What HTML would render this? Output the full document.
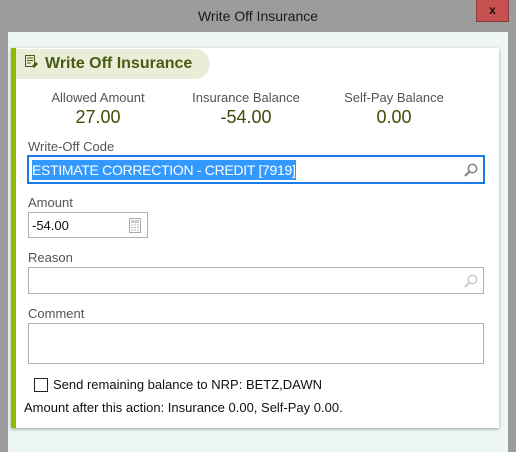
<!DOCTYPE html>
<html><head><style>
*{margin:0;padding:0;box-sizing:border-box}
body{width:516px;height:452px;background:#9c9c9c;font-family:"Liberation Sans",sans-serif;position:relative;overflow:hidden}
.abs{position:absolute;white-space:nowrap}
.title{left:0;top:8px;width:516px;text-align:center;font-size:14px;color:#1a1a1a}
.close{left:476px;top:0;width:33px;height:22px;background:#c75050;border:1px solid #8a3a3a;border-top:none;color:#111;font-weight:bold;font-size:12px;text-align:center;line-height:20px}
.client{left:8px;top:32px;width:500px;height:420px;background:#eef6f3}
.card{left:11px;top:48px;width:488px;height:380px;background:#fff;box-shadow:0 1px 3px rgba(0,0,0,.35);border-left:5px solid #8fbc00}
.pill{left:16px;top:49px;width:194px;height:30px;background:#e8eed8;border-radius:0 15px 15px 0}
.htext{left:45px;top:55px;font-size:16px;font-weight:bold;color:#4b5a12}
.lab{font-size:13px;color:#555;text-align:center;width:150px}
.val{font-size:18px;color:#3f4d05;text-align:center;width:150px}
.fl{font-size:13px;color:#555}
.inp{border:1px solid #b0b0b0;background:#fff}
</style></head><body>
<div class="abs title">Write Off Insurance</div>
<div class="abs close">x</div>
<div class="abs client"></div>
<div class="abs card"></div>
<div class="abs pill"></div>
<svg class="abs" style="left:24px;top:54px" width="16" height="16" viewBox="0 0 16 16"><rect x="1.5" y="1.5" width="9" height="11" fill="none" stroke="#4b5a12"/><path d="M3 4h6M3 6.5h6M3 9h4" stroke="#4b5a12"/><path d="M8 12l4-4 2 2-4 4z" fill="#4b5a12"/></svg>
<div class="abs htext">Write Off Insurance</div>
<div class="abs lab" style="left:23px;top:90px">Allowed Amount</div>
<div class="abs lab" style="left:171px;top:90px">Insurance Balance</div>
<div class="abs lab" style="left:319px;top:90px">Self-Pay Balance</div>
<div class="abs val" style="left:23px;top:107px">27.00</div>
<div class="abs val" style="left:171px;top:107px">-54.00</div>
<div class="abs val" style="left:319px;top:107px">0.00</div>
<div class="abs fl" style="left:28px;top:139px">Write-Off Code</div>
<div class="abs" style="left:27px;top:155px;width:458px;height:29px;border:2px solid #1a7ae8;background:#fff"></div>
<div class="abs" style="left:32px;top:160px;height:20px;background:#3399ff;color:#fff;font-size:14px;line-height:20px;letter-spacing:-0.3px">ESTIMATE CORRECTION - CREDIT [7919]</div>
<svg class="abs" style="left:463px;top:162px" width="16" height="16" viewBox="0 0 16 16"><circle cx="9.5" cy="6.5" r="4.2" fill="none" stroke="#888" stroke-width="1.6"/><path d="M6.5 9.5L2 14" stroke="#888" stroke-width="2.2"/></svg>
<div class="abs fl" style="left:28px;top:195px">Amount</div>
<div class="abs inp" style="left:28px;top:212px;width:120px;height:26px"></div>
<div class="abs" style="left:32px;top:218px;font-size:13px;color:#111">-54.00</div>
<svg class="abs" style="left:129px;top:218px" width="12" height="15" viewBox="0 0 12 15"><rect x=".5" y=".5" width="11" height="14" fill="none" stroke="#aaa"/><rect x="2" y="2" width="8" height="3" fill="#ccc"/><path d="M2 7h2M5 7h2M8 7h2M2 9.5h2M5 9.5h2M8 9.5h2M2 12h2M5 12h2M8 12h2" stroke="#bbb"/></svg>
<div class="abs fl" style="left:28px;top:250px">Reason</div>
<div class="abs inp" style="left:28px;top:267px;width:456px;height:27px"></div>
<svg class="abs" style="left:463px;top:273px" width="16" height="16" viewBox="0 0 16 16"><circle cx="9.5" cy="6.5" r="4.2" fill="none" stroke="#ccc" stroke-width="1.6"/><path d="M6.5 9.5L2 14" stroke="#ccc" stroke-width="2.2"/></svg>
<div class="abs fl" style="left:28px;top:306px">Comment</div>
<div class="abs inp" style="left:28px;top:323px;width:456px;height:41px"></div>
<div class="abs" style="left:34px;top:378px;width:14px;height:14px;border:1px solid #222;background:#fff"></div>
<div class="abs" style="left:53px;top:377px;font-size:13px;color:#111">Send remaining balance to NRP: BETZ,DAWN</div>
<div class="abs" style="left:24px;top:400px;font-size:13px;color:#111">Amount after this action: Insurance 0.00, Self-Pay 0.00.</div>
</body></html>
